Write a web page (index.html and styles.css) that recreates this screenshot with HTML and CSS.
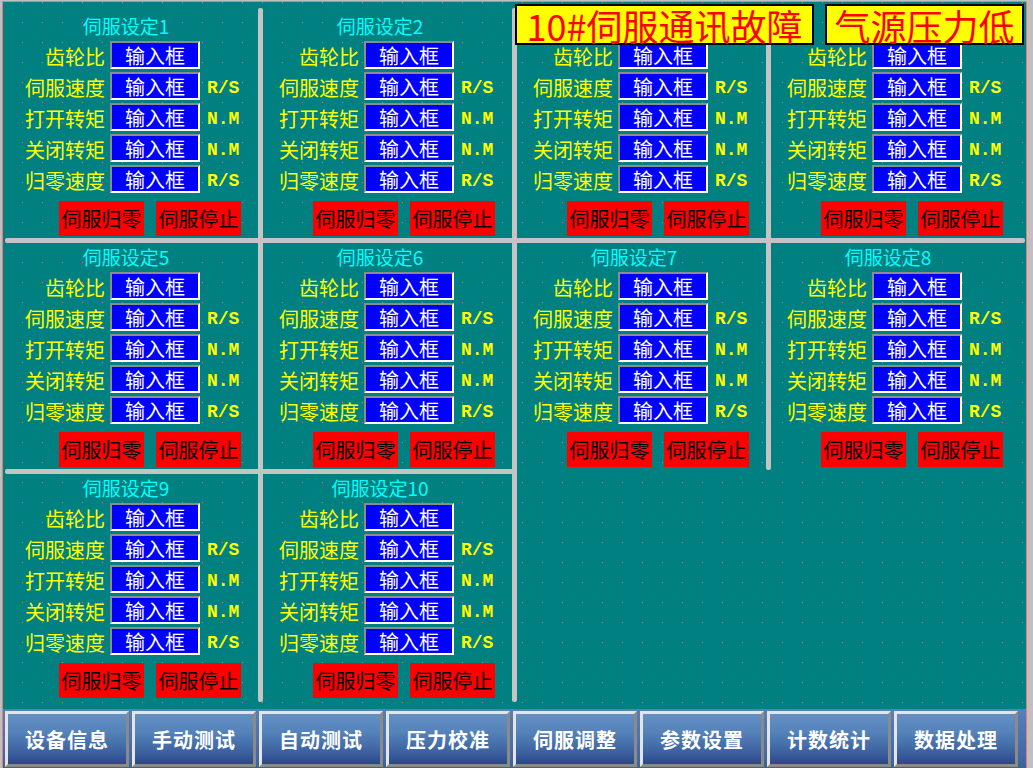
FILE: index.html
```html
<!DOCTYPE html>
<html lang="zh-CN">
<head>
<meta charset="utf-8">
<title>伺服设定</title>
<link rel="stylesheet" href="styles.css">
</head>
<body>
<div class="frame">
  <div class="screen">
    <div class="area">
      <div class="vdiv c-d1"></div>
      <div class="vdiv c-d2"></div>
      <div class="vdiv short c-d3"></div>
      <div class="hdiv long r-d1"></div>
      <div class="hdiv half r-d2"></div>

      <section class="panel r1 c1">
        <div class="title">伺服设定1</div>
        <div class="rows">
          <span class="label">齿轮比</span><span class="input">输入框</span><span class="unit"></span>
          <span class="label">伺服速度</span><span class="input">输入框</span><span class="unit">R/S</span>
          <span class="label">打开转矩</span><span class="input">输入框</span><span class="unit">N.M</span>
          <span class="label">关闭转矩</span><span class="input">输入框</span><span class="unit">N.M</span>
          <span class="label">归零速度</span><span class="input">输入框</span><span class="unit">R/S</span>
        </div>
        <div class="btns"><span class="btn">伺服归零</span><span class="btn">伺服停止</span></div>
      </section>

      <section class="panel r1 c2">
        <div class="title">伺服设定2</div>
        <div class="rows">
          <span class="label">齿轮比</span><span class="input">输入框</span><span class="unit"></span>
          <span class="label">伺服速度</span><span class="input">输入框</span><span class="unit">R/S</span>
          <span class="label">打开转矩</span><span class="input">输入框</span><span class="unit">N.M</span>
          <span class="label">关闭转矩</span><span class="input">输入框</span><span class="unit">N.M</span>
          <span class="label">归零速度</span><span class="input">输入框</span><span class="unit">R/S</span>
        </div>
        <div class="btns"><span class="btn">伺服归零</span><span class="btn">伺服停止</span></div>
      </section>

      <section class="panel r1 c3">
        <div class="title"></div>
        <div class="rows">
          <span class="label">齿轮比</span><span class="input">输入框</span><span class="unit"></span>
          <span class="label">伺服速度</span><span class="input">输入框</span><span class="unit">R/S</span>
          <span class="label">打开转矩</span><span class="input">输入框</span><span class="unit">N.M</span>
          <span class="label">关闭转矩</span><span class="input">输入框</span><span class="unit">N.M</span>
          <span class="label">归零速度</span><span class="input">输入框</span><span class="unit">R/S</span>
        </div>
        <div class="btns"><span class="btn">伺服归零</span><span class="btn">伺服停止</span></div>
      </section>

      <section class="panel r1 c4">
        <div class="title"></div>
        <div class="rows">
          <span class="label">齿轮比</span><span class="input">输入框</span><span class="unit"></span>
          <span class="label">伺服速度</span><span class="input">输入框</span><span class="unit">R/S</span>
          <span class="label">打开转矩</span><span class="input">输入框</span><span class="unit">N.M</span>
          <span class="label">关闭转矩</span><span class="input">输入框</span><span class="unit">N.M</span>
          <span class="label">归零速度</span><span class="input">输入框</span><span class="unit">R/S</span>
        </div>
        <div class="btns"><span class="btn">伺服归零</span><span class="btn">伺服停止</span></div>
      </section>

      <section class="panel r2 c1">
        <div class="title">伺服设定5</div>
        <div class="rows">
          <span class="label">齿轮比</span><span class="input">输入框</span><span class="unit"></span>
          <span class="label">伺服速度</span><span class="input">输入框</span><span class="unit">R/S</span>
          <span class="label">打开转矩</span><span class="input">输入框</span><span class="unit">N.M</span>
          <span class="label">关闭转矩</span><span class="input">输入框</span><span class="unit">N.M</span>
          <span class="label">归零速度</span><span class="input">输入框</span><span class="unit">R/S</span>
        </div>
        <div class="btns"><span class="btn">伺服归零</span><span class="btn">伺服停止</span></div>
      </section>

      <section class="panel r2 c2">
        <div class="title">伺服设定6</div>
        <div class="rows">
          <span class="label">齿轮比</span><span class="input">输入框</span><span class="unit"></span>
          <span class="label">伺服速度</span><span class="input">输入框</span><span class="unit">R/S</span>
          <span class="label">打开转矩</span><span class="input">输入框</span><span class="unit">N.M</span>
          <span class="label">关闭转矩</span><span class="input">输入框</span><span class="unit">N.M</span>
          <span class="label">归零速度</span><span class="input">输入框</span><span class="unit">R/S</span>
        </div>
        <div class="btns"><span class="btn">伺服归零</span><span class="btn">伺服停止</span></div>
      </section>

      <section class="panel r2 c3">
        <div class="title">伺服设定7</div>
        <div class="rows">
          <span class="label">齿轮比</span><span class="input">输入框</span><span class="unit"></span>
          <span class="label">伺服速度</span><span class="input">输入框</span><span class="unit">R/S</span>
          <span class="label">打开转矩</span><span class="input">输入框</span><span class="unit">N.M</span>
          <span class="label">关闭转矩</span><span class="input">输入框</span><span class="unit">N.M</span>
          <span class="label">归零速度</span><span class="input">输入框</span><span class="unit">R/S</span>
        </div>
        <div class="btns"><span class="btn">伺服归零</span><span class="btn">伺服停止</span></div>
      </section>

      <section class="panel r2 c4">
        <div class="title">伺服设定8</div>
        <div class="rows">
          <span class="label">齿轮比</span><span class="input">输入框</span><span class="unit"></span>
          <span class="label">伺服速度</span><span class="input">输入框</span><span class="unit">R/S</span>
          <span class="label">打开转矩</span><span class="input">输入框</span><span class="unit">N.M</span>
          <span class="label">关闭转矩</span><span class="input">输入框</span><span class="unit">N.M</span>
          <span class="label">归零速度</span><span class="input">输入框</span><span class="unit">R/S</span>
        </div>
        <div class="btns"><span class="btn">伺服归零</span><span class="btn">伺服停止</span></div>
      </section>

      <section class="panel r3 c1">
        <div class="title">伺服设定9</div>
        <div class="rows">
          <span class="label">齿轮比</span><span class="input">输入框</span><span class="unit"></span>
          <span class="label">伺服速度</span><span class="input">输入框</span><span class="unit">R/S</span>
          <span class="label">打开转矩</span><span class="input">输入框</span><span class="unit">N.M</span>
          <span class="label">关闭转矩</span><span class="input">输入框</span><span class="unit">N.M</span>
          <span class="label">归零速度</span><span class="input">输入框</span><span class="unit">R/S</span>
        </div>
        <div class="btns"><span class="btn">伺服归零</span><span class="btn">伺服停止</span></div>
      </section>

      <section class="panel r3 c2">
        <div class="title">伺服设定10</div>
        <div class="rows">
          <span class="label">齿轮比</span><span class="input">输入框</span><span class="unit"></span>
          <span class="label">伺服速度</span><span class="input">输入框</span><span class="unit">R/S</span>
          <span class="label">打开转矩</span><span class="input">输入框</span><span class="unit">N.M</span>
          <span class="label">关闭转矩</span><span class="input">输入框</span><span class="unit">N.M</span>
          <span class="label">归零速度</span><span class="input">输入框</span><span class="unit">R/S</span>
        </div>
        <div class="btns"><span class="btn">伺服归零</span><span class="btn">伺服停止</span></div>
      </section>
    </div>

    <div class="alerts">
      <div class="alert wide">10#伺服通讯故障</div>
      <div class="alert narrow">气源压力低</div>
    </div>
  </div>

  <nav class="nav">
    <span class="navbtn">设备信息</span>
    <span class="navbtn">手动测试</span>
    <span class="navbtn">自动测试</span>
    <span class="navbtn">压力校准</span>
    <span class="navbtn">伺服调整</span>
    <span class="navbtn">参数设置</span>
    <span class="navbtn">计数统计</span>
    <span class="navbtn">数据处理</span>
  </nav>
</div>
</body>
</html>
```

FILE: styles.css
```css
html, body {
  margin: 0;
  padding: 0;
}

body {
  width: 1033px;
  height: 768px;
  overflow: hidden;
  background: #c0c0c0;
  font-family: "Noto Sans CJK SC", "Noto Sans", sans-serif;
}

.frame {
  margin: 1px 0 0 2px;
  width: 1023px;
  height: 767px;
  border-top: 1px solid #f07878;
  border-left: 1px solid #f07878;
  border-right: 1px solid #f07878;
  box-sizing: content-box;
  display: flex;
  flex-direction: column;
}

.screen {
  position: relative;
  height: 707px;
  background-color: #008080;
  background-image:
    linear-gradient(to bottom, transparent 1px, #008080 1px),
    linear-gradient(to right, #f06a6a 1px, #008080 1px);
  background-size: 20px 20px, 20px 20px;
  background-position: 19px 20px, 19px 20px;
}

.area {
  display: grid;
  grid-template-columns: 249px 5px 249px 5px 249px 5px 249px;
  grid-template-rows: 226px 5px 226px 5px 226px;
  padding: 10px 0 0 6px;
}

.vdiv {
  background: #c4c4c4;
  border-radius: 2px;
  grid-row: 1 / 6;
  margin-top: -4px;
  margin-bottom: -2px;
}
.vdiv.c-d1 { grid-column: 2; }
.vdiv.c-d2 { grid-column: 4; }
.vdiv.c-d3 { grid-column: 6; grid-row: 1 / 4; margin-bottom: -1px; }

.hdiv {
  background: #c4c4c4;
  border-radius: 2px;
}
.hdiv.r-d1 { grid-row: 2; grid-column: 1 / 8; margin: 0 -5px 0 -4px; }
.hdiv.r-d2 { grid-row: 4; grid-column: 1 / 4; margin: 0 -3px 0 -4px; }

.r1 { grid-row: 1; }
.r2 { grid-row: 3; }
.r3 { grid-row: 5; }
.c1 { grid-column: 1; }
.c2 { grid-column: 3; }
.c3 { grid-column: 5; }
.c4 { grid-column: 7; }

.panel {
  padding-top: 2px;
}

.title {
  width: 234px;
  height: 22px;
  line-height: 23px;
  text-align: center;
  font-size: 19px;
  color: #00ffff;
}

.rows {
  margin-top: 5px;
  display: grid;
  grid-template-columns: 96px 90px 40px;
  grid-auto-rows: 28px;
  column-gap: 5px;
  row-gap: 3px;
}

.label {
  text-align: right;
  color: #ffff00;
  font-size: 20px;
  line-height: 31px;
  white-space: nowrap;
}

.input {
  box-sizing: border-box;
  height: 28px;
  padding-top: 2px;
  background: #0000ff;
  border: 2px solid;
  border-color: #8c8c8c #ffffff #ffffff #8c8c8c;
  color: #ffffff;
  font-size: 20px;
  line-height: 22px;
  text-align: center;
  white-space: nowrap;
}

.unit {
  padding-left: 2px;
  color: #ffff00;
  font-family: "Liberation Mono", monospace;
  font-weight: bold;
  font-size: 18px;
  line-height: 32px;
  white-space: nowrap;
}

.btns {
  margin-top: 8px;
  padding-left: 50px;
  display: flex;
  gap: 12px;
}

.btn {
  width: 85px;
  height: 35px;
  background: #ff0000;
  color: #000000;
  font-size: 20px;
  line-height: 36px;
  text-align: center;
  white-space: nowrap;
}

.alerts {
  position: absolute;
  top: 2px;
  left: 512px;
  display: flex;
  gap: 11px;
}

.alert {
  box-sizing: border-box;
  height: 41px;
  border: 2px solid #000000;
  background: #ffff00;
  color: #ff0000;
  font-size: 36px;
  line-height: 38px;
  text-align: center;
  white-space: nowrap;
}
.alert.wide { width: 299px; }
.alert.narrow { width: 199px; }

.nav {
  flex: 1;
  display: flex;
  gap: 3px;
  padding: 2px 0 0 2px;
  background: linear-gradient(to bottom, #5680b8 0%, #4a72ad 50%, #3c609e 100%);
}

.navbtn {
  box-sizing: border-box;
  width: 124px;
  height: 56px;
  border: 3px solid;
  border-color: #e4e4e4 #8a8a8a #8a8a8a #e4e4e4;
  background: linear-gradient(to bottom, #6390c4 0%, #5583ba 35%, #4670ab 60%, #3a5d9d 80%, #2c4789 100%);
  color: #ffffff;
  font-size: 20px;
  font-weight: bold;
  line-height: 51px;
  text-align: center;
  letter-spacing: 1px;
  white-space: nowrap;
}
```
